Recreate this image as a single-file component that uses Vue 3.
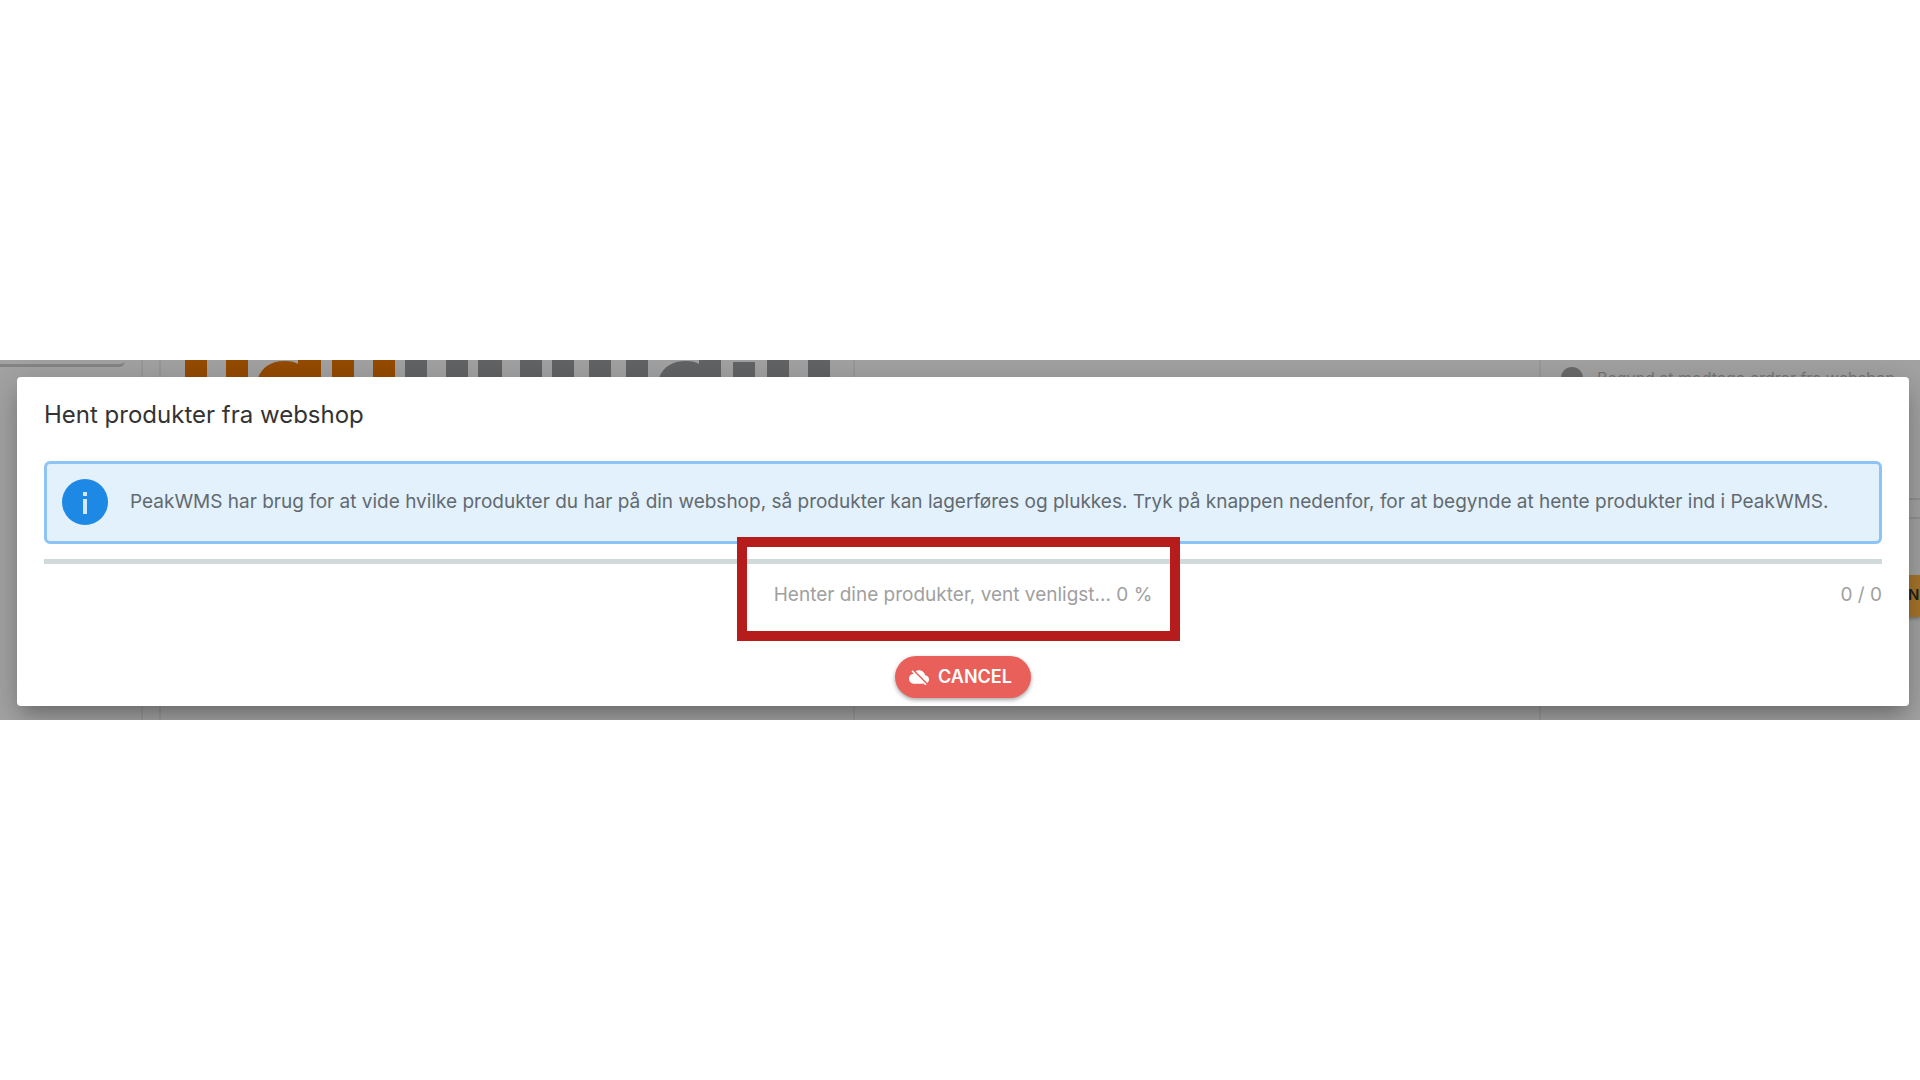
<script setup>
import { ref } from 'vue'

const fetched = ref(0)
const total = ref(0)
const percent = ref(0)
</script>

<template>
  <div class="screen">
    <div class="viewport">
      <div class="page" aria-hidden="true">
        <div class="col side"><div class="side-card"></div></div>
        <div class="col gutter"></div>
        <div class="col brand">
          <svg class="logo" width="650" height="18" viewBox="0 0 650 18">
            <g fill="#964b00">
              <rect x="0" width="22" height="18" />
              <rect x="41" width="22" height="18" />
              <path d="M73 18C77 7 86 1 100 1C106 1 110 2 113 4V0H136V18Z" />
              <rect x="147" width="22" height="18" />
              <rect x="188" width="22" height="18" />
            </g>
            <g fill="#636466">
              <rect x="220" width="22" height="18" />
              <rect x="261" width="22" height="18" />
              <rect x="293" width="24" height="18" />
              <rect x="335" width="22" height="18" />
              <rect x="367" width="22" height="18" />
              <rect x="404" width="22" height="18" />
              <rect x="441" width="22" height="18" />
              <path d="M474 18C478 7 487 1 501 1C507 1 511 2 514 4V0H536V18Z" />
              <rect x="548" y="2" width="22" height="16" />
              <rect x="582" width="22" height="18" />
              <rect x="623" width="22" height="18" />
            </g>
          </svg>
        </div>
        <div class="col middle"></div>
        <div class="col steps">
          <div class="step"><span class="dot"></span><span>Begynd at modtage ordrer fra webshop</span></div>
          <div class="divider"></div>
          <div class="next">N</div>
        </div>
      </div>

      <section class="dialog" role="dialog" aria-modal="true" aria-labelledby="dialog-title">
        <h1 id="dialog-title">Hent produkter fra webshop</h1>

        <div class="alert">
          <svg class="info" width="46" height="46" viewBox="0 0 46 46" aria-hidden="true">
            <circle cx="23" cy="23" r="23" fill="#1e88e5" />
            <rect x="21" y="13" width="4" height="4" fill="#d3e8fb" />
            <rect x="21" y="20" width="4" height="15" fill="#d3e8fb" />
          </svg>
          <p>PeakWMS har brug for at vide hvilke produkter du har på din webshop, så produkter kan lagerføres og plukkes. Tryk på knappen nedenfor, for at begynde at hente produkter ind i PeakWMS.</p>
        </div>

        <div class="track" role="progressbar" :aria-valuenow="percent" aria-valuemin="0" aria-valuemax="100">
          <div class="bar" :style="{ width: percent + '%' }"></div>
        </div>

        <div class="status">
          <span class="message">Henter dine produkter, vent venligst... {{ percent }} %</span>
          <span class="count">{{ fetched }} / {{ total }}</span>
        </div>

        <button class="cancel" type="button">
          <svg width="20" height="20" viewBox="0 0 24 24" aria-hidden="true">
            <path
              fill="#fff"
              d="M19.35 10.04C18.67 6.59 15.64 4 12 4c-1.48 0-2.85.43-4.01 1.17l13.9 13.9C23.16 18.16 24 16.68 24 15c0-2.64-2.05-4.78-4.65-4.96zM3 5.27l2.75 2.74C2.56 8.15 0 10.77 0 14c0 3.31 2.69 6 6 6h11.73l2 2L21 20.73 4.27 4z"
            />
          </svg>
          <span>CANCEL</span>
        </button>
      </section>
    </div>
  </div>
</template>

<style>
body {
  margin: 0;
  background: #fff;
}
</style>

<style scoped>
.screen {
  min-height: 100vh;
  display: flex;
  align-items: center;
  font-family: Inter, 'Liberation Sans', sans-serif;
}

.viewport {
  width: 100%;
  display: grid;
  overflow: hidden;
  background: #a3a3a3;
}

.page,
.dialog {
  grid-area: 1 / 1;
  min-width: 0;
}

.page {
  display: flex;
}

.col {
  box-sizing: border-box;
  border-right: 2px solid #999;
}

.side {
  width: 143px;
}

.side-card {
  width: 125px;
  height: 4px;
  border-bottom: 3px solid #858585;
  border-bottom-right-radius: 6px;
}

.gutter {
  width: 18px;
}

.brand {
  width: 694px;
  padding-left: 24px;
}

.logo {
  display: block;
}

.middle {
  flex: 1;
}

.steps {
  width: 379px;
  border-right: 0;
}

.step {
  display: flex;
  align-items: center;
  gap: 14px;
  height: 36px;
  padding-left: 20px;
  font-size: 16px;
  line-height: 24px;
  color: #777;
  white-space: nowrap;
}

.dot {
  width: 22px;
  height: 22px;
  border-radius: 50%;
  background: #6b6b6b;
}

.divider {
  height: 17px;
  margin-top: 102px;
  border-top: 2px solid #939393;
  border-bottom: 2px solid #939393;
}

.next {
  box-sizing: border-box;
  width: 39px;
  height: 42px;
  margin: 56px 0 0 340px;
  padding-left: 27px;
  background: #a6752b;
  box-shadow: 0 2px 3px rgba(0, 0, 0, 0.25);
  color: #222;
  font-size: 15px;
  font-weight: 600;
  line-height: 40px;
}

.dialog {
  display: flex;
  flex-direction: column;
  margin: 17px 11px 14px 17px;
  padding: 24px 27px 8px;
  border-radius: 4px;
  background: #fff;
  box-shadow:
    0 12px 16px -6px rgba(0, 0, 0, 0.22),
    0 8px 36px 2px rgba(0, 0, 0, 0.2);
}

h1 {
  margin: 0 0 32px;
  font-size: 24px;
  font-weight: 400;
  line-height: 28px;
  color: #333;
}

.alert {
  display: flex;
  align-items: center;
  gap: 22px;
  padding: 15px 8px 16px 15px;
  border: 3px solid #8dc3f5;
  border-radius: 6px;
  background: #e3f1fc;
}

.info {
  flex: none;
}

.alert p {
  margin: 0;
  font-size: 19px;
  line-height: 28px;
  color: #626a70;
}

.track {
  height: 5px;
  margin-top: 15px;
  background: #d1dadb;
}

.bar {
  height: 100%;
  background: #607d8b;
}

.status {
  position: relative;
  display: grid;
  grid-template-columns: 1fr auto 1fr;
  margin-top: 17px;
  font-size: 19px;
  line-height: 28px;
  color: #a0a0a0;
}

.message {
  grid-column: 2;
}

.count {
  text-align: right;
}

/* Callout frame around the progress message */
.status::before {
  content: '';
  position: absolute;
  box-sizing: border-box;
  top: -44px;
  left: calc(50% - 226px);
  width: 443px;
  height: 104px;
  border: 10px solid #b71c1c;
}

.cancel {
  display: flex;
  align-items: center;
  align-self: center;
  gap: 9px;
  height: 42px;
  margin-top: 47px;
  padding: 0 19px 0 14px;
  border: 0;
  border-radius: 21px;
  background: #e95f5a;
  box-shadow: 0 2px 4px rgba(0, 0, 0, 0.35);
  color: #fff;
  font-family: inherit;
  font-size: 18px;
  font-weight: 600;
  line-height: 24px;
}
</style>
